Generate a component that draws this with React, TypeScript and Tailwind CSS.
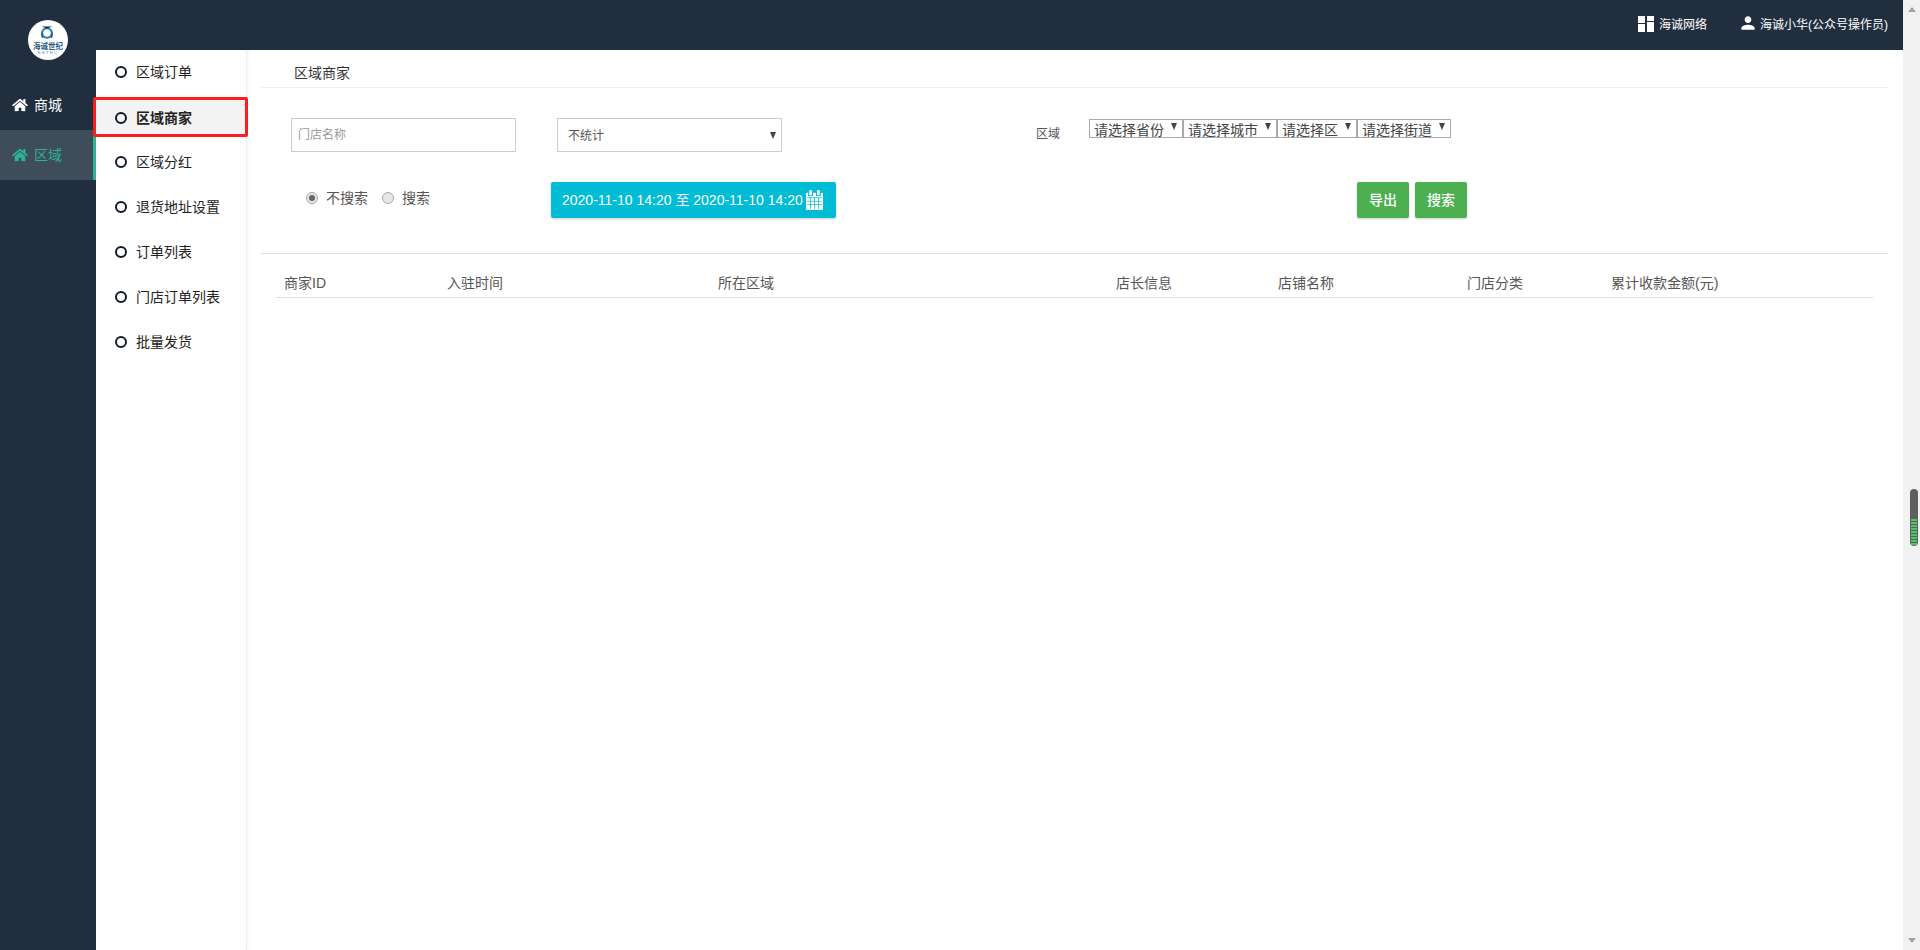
import React from "react";
import { FaHome } from "react-icons/fa";
import { MdPerson } from "react-icons/md";

const subItems = ["区域订单", "区域商家", "区域分红", "退货地址设置", "订单列表", "门店订单列表", "批量发货"];
const cols: [string, string][] = [
  ["商家ID", "w-[163px]"],
  ["入驻时间", "w-[271px]"],
  ["所在区域", "w-[398px]"],
  ["店长信息", "w-[162px]"],
  ["店铺名称", "w-[189px]"],
  ["门店分类", "w-[144px]"],
  ["累计收款金额(元)", "w-[180px]"],
];
const regionSelects: [string, string][] = [
  ["请选择省份", "w-[94px]"],
  ["请选择城市", "w-[94px]"],
  ["请选择区", "w-[80px]"],
  ["请选择街道", "w-[94px]"],
];
const stripes = [0, 1, 2, 3, 4, 5, 6, 7, 8];

function Logo() {
  return (
    <div className="w-10 h-10 rounded-full bg-white overflow-hidden">
      <svg viewBox="0 0 40 40" className="w-10 h-10">
        <circle cx="19" cy="13" r="4.8" fill="none" stroke="#1f78b8" strokeWidth="2" />
        <path d="M13.5 6.5 L24.5 6.5 L19 8.6 Z" fill="#223" />
        <path d="M13 11 L15.5 18.5 L13.5 17 Z M25 11 L22.5 18.5 L24.5 17 Z" fill="#334" />
        <text x="20" y="29" textAnchor="middle" fontSize="7.5" fontWeight="700" fill="#26597f" fontFamily="'Noto Sans CJK SC', sans-serif">海诚世纪</text>
        <text x="20" y="34" textAnchor="middle" fontSize="4" letterSpacing="1.4" fill="#3b87c4" fontFamily="'Liberation Sans', sans-serif">NETHC</text>
      </svg>
    </div>
  );
}

function CalendarIcon() {
  return (
    <svg viewBox="0 0 16 19" className="w-[17px] h-[20px] ml-[3px] fill-white shrink-0">
      <rect x="3" y="0" width="2.6" height="5" rx="1" />
      <rect x="10.4" y="0" width="2.6" height="5" rx="1" />
      <path d="M1 2.5h1v3.3h4.6v-3.3h2.8v3.3h4.6v-3.3h1a1 1 0 0 1 1 1V18a1 1 0 0 1-1 1H1a1 1 0 0 1-1-1V3.500a1 1 0 0 1 1-1z" />
      <g className="fill-[#00bcd4]">
        <rect x="1" y="7" width="14" height="0.7" />
        <rect x="1" y="10.3" width="14" height="0.7" />
        <rect x="1" y="13.6" width="14" height="0.7" />
        <rect x="4" y="7" width="0.7" height="11" />
        <rect x="7.7" y="7" width="0.7" height="11" />
        <rect x="11.4" y="7" width="0.7" height="11" />
      </g>
    </svg>
  );
}

function Triangle({ className }: { className: string }) {
  return <span className={"w-0 h-0 border-x-[3.5px] border-x-transparent border-t-[7px] " + className} />;
}

export default function App() {
  return (
    <div className="flex w-full h-[950px] overflow-hidden bg-white text-[#333] font-['Liberation_Sans','Noto_Sans_CJK_SC',sans-serif]">
      <div className="flex-1 min-w-0 flex flex-col">
        {/* top bar */}
        <header className="h-[50px] bg-[#202e3e] flex items-start justify-end text-white text-xs pt-[15px] pr-[15px] shrink-0">
          <div className="flex items-center">
            <svg viewBox="0 0 16 16" className="w-4 h-4 mr-[5px] fill-white">
              <rect x="0" y="0" width="7" height="7" />
              <rect x="0" y="8" width="7" height="8" />
              <rect x="9" y="0" width="7" height="5" />
              <rect x="9" y="6" width="7" height="10" />
            </svg>
            <span className="mt-[2px]">海诚网络</span>
          </div>
          <div className="flex items-center ml-[31px]">
            <MdPerson className="w-[20px] h-[20px] mr-[2px] -mt-[3px]" />
            <span className="mt-[2px]">海诚小华(公众号操作员)</span>
          </div>
        </header>

        <div className="flex-1 min-h-0 flex">
          {/* icon sidebar */}
          <nav className="w-[96px] shrink-0 bg-[#202e3e] relative text-sm">
            <div className="absolute left-[28px] -top-[30px]">
              <Logo />
            </div>
            <div className="h-[50px] mt-[30px] flex items-center pl-[12px] text-white">
              <FaHome className="w-[16px] h-[14px] mr-[6px]" />
              <span>商城</span>
            </div>
            <div className="h-[50px] flex items-center pl-[12px] bg-[#3f4c5a] border-r-[3px] border-[#2ab595] text-[#2ab595]">
              <FaHome className="w-[16px] h-[14px] mr-[6px]" />
              <span>区域</span>
            </div>
          </nav>

          {/* sub menu */}
          <aside className="w-[151px] shrink-0 relative border-r border-[#eeeeee] shadow-[1px_0_3px_rgba(0,0,0,0.05)] text-sm">
            {subItems.map((item, i) => (
              <div key={item} className={"h-[45px] flex items-center pl-[19px] relative " + (i === 1 ? "" : "pb-[2px]")}>
                {i === 1 && (
                  <div className="absolute -left-[3px] -right-[2px] top-[2px] h-[40px] border-[3px] border-[#fb1c1c] rounded-[2px] bg-[#f3f3f3]" />
                )}
                <span className="relative w-3 h-3 rounded-full border-2 border-[#0f1a2a] mr-[9px]" />
                <span className={"relative text-[#222] " + (i === 1 ? "font-bold" : "")}>{item}</span>
              </div>
            ))}
          </aside>

          {/* main */}
          <main className="flex-1 min-w-0 pl-[14px] pr-[15px]">
            <div className="h-[38px] border-b border-[#eeeeee] pl-[33px] pt-[13px] text-sm leading-[20px]">区域商家</div>

            <div className="flex items-start pl-[30px] mt-[30px]">
              <input
                placeholder="门店名称"
                className="w-[225px] h-[34px] border border-[#cccccc] px-[6px] text-xs placeholder:text-[#999] outline-none"
              />
              <div className="w-[225px] h-[34px] ml-[41px] border border-[#cccccc] flex items-center justify-between pl-[10px] pr-[5px] text-xs text-[#555]">
                <span className="mt-[2px]">不统计</span>
                <Triangle className="border-t-[#444]" />
              </div>
              <span className="ml-[254px] mt-[6px] text-xs leading-[20px] text-[#555]">区域</span>
              <div className="flex ml-[29px] mt-px">
                {regionSelects.map(([label, w]) => (
                  <div key={label} className={"h-[19px] border border-[#a9a9a9] flex justify-between pl-[4px] pr-[5px] text-sm leading-[20px] text-[#444] " + w}>
                    <span>{label}</span>
                    <Triangle className="mt-[3px] border-t-[#444]" />
                  </div>
                ))}
              </div>
            </div>

            <div className="flex items-start mt-[30px] pl-[45px]">
              <div className="w-[245px] h-[36px] flex items-center text-sm text-[#555] -translate-y-[2px]">
                <span className="w-3 h-3 rounded-full border border-[#aaa] bg-[#e6e6e6] flex items-center justify-center mr-[8px]">
                  <span className="w-[6px] h-[6px] rounded-full bg-[#666]" />
                </span>
                <span>不搜索</span>
                <span className="w-3 h-3 rounded-full border border-[#aaa] bg-[#e6e6e6] ml-[14px] mr-[8px]" />
                <span>搜索</span>
              </div>
              <button className="w-[285px] h-[36px] bg-[#00bcd4] rounded-[2px] shadow-[0_1px_2px_rgba(0,0,0,0.2)] text-white text-sm flex items-center pl-[11px]">
                <span className="whitespace-nowrap">2020-11-10 14:20 至 2020-11-10 14:20</span>
                <CalendarIcon />
              </button>
              <button className="w-[52px] h-[36px] ml-[521px] bg-[#4caf50] rounded-[2px] shadow-[0_1px_2px_rgba(0,0,0,0.2)] text-white text-sm font-medium">导出</button>
              <button className="w-[52px] h-[36px] ml-[6px] bg-[#4caf50] rounded-[2px] shadow-[0_1px_2px_rgba(0,0,0,0.2)] text-white text-sm font-medium">搜索</button>
            </div>

            <div className="border-t border-[#dddddd] mt-[35px]" />

            <div className="mx-[15px] mt-[19px] h-[25px] border-b border-[#dddddd] flex text-sm text-[#555] leading-[20px] pl-[8px]">
              {cols.map(([c, w]) => (
                <div key={c} className={"shrink-0 " + w}>{c}</div>
              ))}
            </div>
          </main>
        </div>
      </div>

      {/* page scrollbar */}
      <div className="w-[17px] shrink-0 bg-[#f1f1f1] flex flex-col items-center pt-[7px] pb-[7px]">
        <span className="w-0 h-0 border-x-[4px] border-x-transparent border-b-[5px] border-b-[#a3a3a3]" />
        <div className="w-2 h-[57px] mt-[477px] self-start ml-[7px] rounded-[4px] bg-[#5f5f5f] flex flex-col items-center gap-[1px] pt-[30px]">
          {stripes.map((s) => (
            <span key={s} className="w-[6px] h-[2px] bg-[#4cc764]" />
          ))}
        </div>
        <span className="mt-auto w-0 h-0 border-x-[4px] border-x-transparent border-t-[5px] border-t-[#a3a3a3]" />
      </div>
    </div>
  );
}
